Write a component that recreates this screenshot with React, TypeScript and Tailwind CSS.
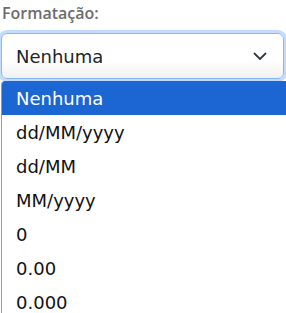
import React from 'react';

const options = ['Nenhuma', 'dd/MM/yyyy', 'dd/MM', 'MM/yyyy', '0', '0.00', '0.000'];

export default function App() {
  return (
    <div className="w-[286px] h-[313px] overflow-hidden bg-white relative">
      {/* Label */}
      <label className="block pl-[2px] pt-[2px] text-[16px] font-semibold text-[#6c6c6c] leading-[22px] font-['Open_Sans',sans-serif]">
        Formatação:
      </label>

      {/* Select (focused) */}
      <div className="mt-[9px] ml-[1px] w-[283px] h-[46px] rounded-[6px] border border-[#86b7fe] bg-gradient-to-b from-white from-60% to-[#f1f1f1] ring-[3px] ring-[#c2dbfe] flex items-center justify-between pl-[14px] pr-[16px] font-['DejaVu_Sans',sans-serif] text-[18px] text-[#212529]">
        <span>Nenhuma</span>
        <svg width="14" height="9" viewBox="0 0 14 9" fill="none" stroke="#343a40" strokeWidth="1.8" strokeLinecap="round" strokeLinejoin="round">
          <path d="M1.5 1.5 7 7l5.5-5.5" />
        </svg>
      </div>

      {/* Dropdown list */}
      <div className="absolute left-[1px] top-[81px] w-[300px] bg-white border-l border-[#9a9a9a] rounded-tl-[4px] overflow-hidden font-['DejaVu_Sans',sans-serif] text-[18px] text-[#111]">
        {options.map((opt, i) => (
          <div
            key={opt}
            className={`h-[34px] flex items-center pl-[14px] ${i === 0 ? 'bg-[#1b66d2] text-white' : ''}`}
          >
            {opt}
          </div>
        ))}
      </div>
    </div>
  );
}
